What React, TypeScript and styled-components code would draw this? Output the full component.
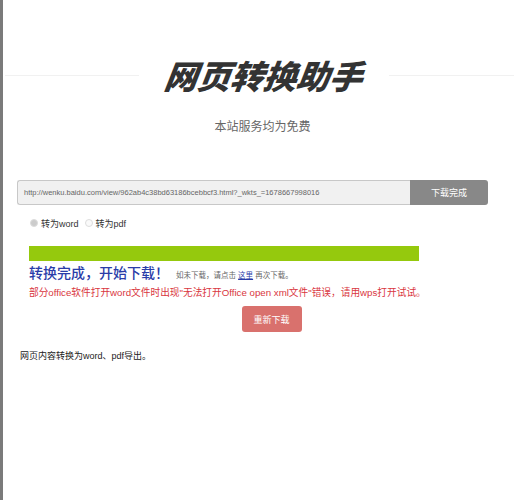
import React from 'react';
import styled, { createGlobalStyle } from 'styled-components';

const GlobalStyle = createGlobalStyle`
  html, body {
    margin: 0;
    padding: 0;
    background: #fff;
    font-family: "Liberation Sans", "Noto Sans CJK SC", sans-serif;
  }
`;

const Page = styled.div`
  min-height: 500px;
  border-left: 3px solid #7a7a7a;
  box-sizing: border-box;
  padding: 55px 26px 0 14px;
`;

const Header = styled.div`
  display: flex;
  align-items: center;
  gap: 26px;
  margin-left: -12px;
  margin-right: -26px;
`;

const Rule = styled.div<{ $grow: number }>`
  flex: ${p => p.$grow};
  height: 1px;
  background: #f1f1f1;
`;

const Title = styled.h1`
  margin: 0;
  font-family: "Noto Sans CJK SC", sans-serif;
  font-size: 33px;
  line-height: 40px;
  font-weight: 900;
  font-style: italic;
  color: #333;
  transform: skewX(-8deg);
`;

const Subtitle = styled.div`
  margin-top: 22px;
  text-align: center;
  font-size: 12px;
  color: #666;
  padding-left: 20px;
`;

const SearchRow = styled.div`
  display: flex;
  margin-top: 46px;
  height: 25px;
`;

const UrlBox = styled.div`
  flex: 1;
  display: flex;
  align-items: center;
  padding-left: 6px;
  background: #f1f1f1;
  border: 1px solid #c8c8c8;
  border-right: none;
  border-radius: 3px 0 0 3px;
  font-size: 7.5px;
  color: #666;
  white-space: nowrap;
  overflow: hidden;
`;

const GrayButton = styled.div`
  width: 78px;
  display: flex;
  align-items: center;
  justify-content: center;
  background: #888;
  color: #fff;
  font-size: 9px;
  border-radius: 0 3px 3px 0;
`;

const Options = styled.div`
  display: flex;
  align-items: center;
  gap: 6px;
  margin: 11px 0 0 13px;
  height: 14px;
  font-size: 9px;
  color: #333;
`;

const Option = styled.label`
  display: flex;
  align-items: center;
  gap: 3px;
`;

const Dot = styled.span<{ $on?: boolean }>`
  width: 6px;
  height: 6px;
  border-radius: 50%;
  border: 1px solid #ddd;
  background: ${p => (p.$on ? '#ccc' : '#fafafa')};
`;

const Result = styled.div`
  margin: 16px 0 0 12px;
`;

const Progress = styled.div`
  width: 390px;
  height: 15px;
  background: #95c90d;
`;

const DoneLine = styled.div`
  display: flex;
  align-items: baseline;
  gap: 7px;
  margin-top: 1px;
`;

const DoneText = styled.span`
  font-family: "Noto Sans CJK SC", sans-serif;
  font-size: 14px;
  font-weight: 500;
  color: #2a3ca8;
`;

const Hint = styled.span`
  font-size: 7.5px;
  color: #666;

  a {
    color: #2a3ca8;
    text-decoration: underline;
  }
`;

const Warning = styled.div`
  margin-top: 3px;
  font-size: 9.7px;
  color: #d9363e;
`;

const ButtonWrap = styled.div`
  display: flex;
  justify-content: center;
  margin-top: 7px;
  padding-left: 26px;
`;

const RedButton = styled.div`
  width: 60px;
  height: 26px;
  display: flex;
  align-items: center;
  justify-content: center;
  background: #d9716d;
  border-radius: 3px;
  color: #fff;
  font-size: 9px;
`;

const Footer = styled.div`
  margin: 17px 0 0 3px;
  font-size: 9px;
  color: #222;
`;

export default function App() {
  return (
    <>
      <GlobalStyle />
      <Page>
        <Header>
          <Rule $grow={1.08} />
          <Title>网页转换助手</Title>
          <Rule $grow={1} />
        </Header>
        <Subtitle>本站服务均为免费</Subtitle>
        <SearchRow>
          <UrlBox>http://wenku.baidu.com/view/962ab4c38bd63186bcebbcf3.html?_wkts_=1678667998016</UrlBox>
          <GrayButton>下载完成</GrayButton>
        </SearchRow>
        <Options>
          <Option><Dot $on />转为word</Option>
          <Option><Dot />转为pdf</Option>
        </Options>
        <Result>
          <Progress />
          <DoneLine>
            <DoneText>转换完成，开始下载！</DoneText>
            <Hint>如未下载，请点击 <a>这里</a> 再次下载。</Hint>
          </DoneLine>
          <Warning>部分office软件打开word文件时出现"无法打开Office open xml文件"错误，请用wps打开试试。</Warning>
          <ButtonWrap>
            <RedButton>重新下载</RedButton>
          </ButtonWrap>
        </Result>
        <Footer>网页内容转换为word、pdf导出。</Footer>
      </Page>
    </>
  );
}
